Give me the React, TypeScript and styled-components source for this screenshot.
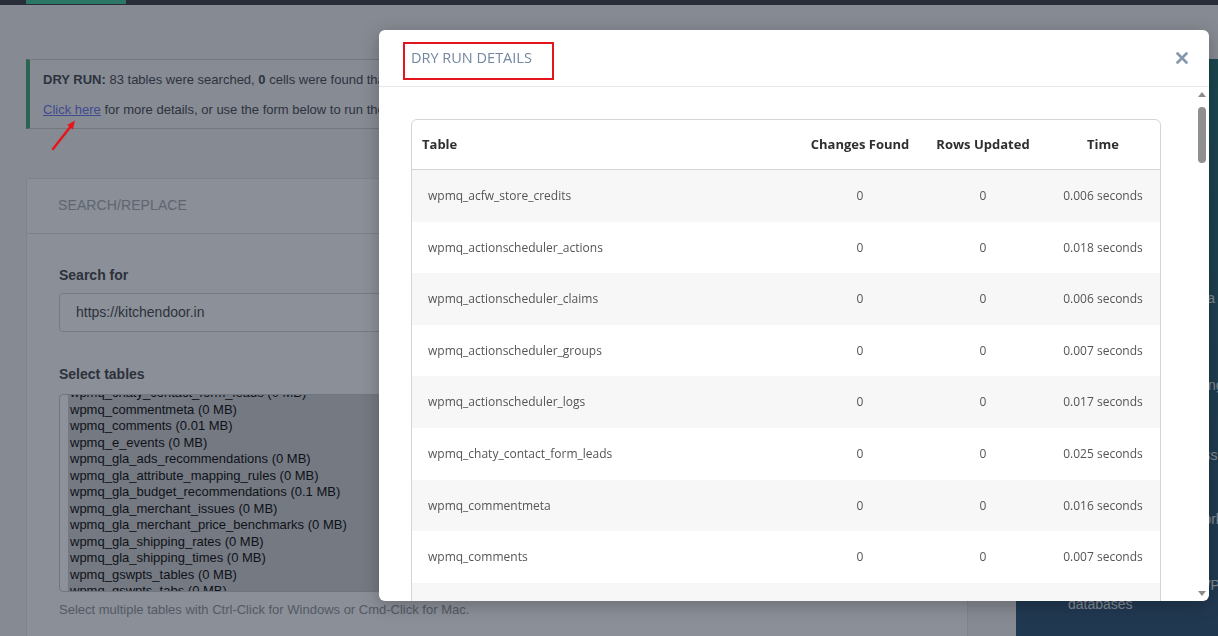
import React, { useLayoutEffect, useRef } from 'react';
import styled, { createGlobalStyle } from 'styled-components';

const GlobalStyle = createGlobalStyle`
  html, body { margin: 0; padding: 0; height: 100%; overflow: hidden; background: #f0f0f1; }
  body { font-family: "Liberation Sans", Arial, sans-serif; color: #3c3c3c; }
  * { box-sizing: border-box; }
`;

const TABLES: string[] = [
  'wpmq_acfw_store_credits', 'wpmq_actionscheduler_actions', 'wpmq_actionscheduler_claims',
  'wpmq_actionscheduler_groups', 'wpmq_actionscheduler_logs', 'wpmq_chaty_contact_form_leads',
  'wpmq_commentmeta', 'wpmq_comments', 'wpmq_e_events', 'wpmq_gla_ads_recommendations',
  'wpmq_gla_attribute_mapping_rules', 'wpmq_gla_budget_recommendations', 'wpmq_gla_merchant_issues',
  'wpmq_gla_merchant_price_benchmarks', 'wpmq_gla_shipping_rates', 'wpmq_gla_shipping_times',
  'wpmq_gswpts_tables', 'wpmq_gswpts_tabs', 'wpmq_links', 'wpmq_litespeed_img_optm',
  'wpmq_litespeed_url', 'wpmq_litespeed_url_file', 'wpmq_options', 'wpmq_postmeta', 'wpmq_posts',
  'wpmq_rank_math_404_logs', 'wpmq_rank_math_internal_links', 'wpmq_rank_math_internal_meta',
  'wpmq_rank_math_redirections', 'wpmq_rank_math_redirections_cache', 'wpmq_term_relationships',
  'wpmq_term_taxonomy', 'wpmq_termmeta', 'wpmq_terms', 'wpmq_usermeta', 'wpmq_users',
  'wpmq_wc_admin_note_actions', 'wpmq_wc_admin_notes', 'wpmq_wc_category_lookup',
  'wpmq_wc_customer_lookup', 'wpmq_wc_download_log', 'wpmq_wc_order_addresses',
  'wpmq_wc_order_coupon_lookup', 'wpmq_wc_order_operational_data', 'wpmq_wc_order_product_lookup',
  'wpmq_wc_order_stats', 'wpmq_wc_order_tax_lookup', 'wpmq_wc_orders', 'wpmq_wc_orders_meta',
  'wpmq_wc_product_attributes_lookup', 'wpmq_wc_product_download_directories',
  'wpmq_wc_product_meta_lookup', 'wpmq_wc_rate_limits', 'wpmq_wc_reserved_stock',
  'wpmq_wc_tax_rate_classes', 'wpmq_wc_webhooks', 'wpmq_woocommerce_api_keys',
  'wpmq_woocommerce_attribute_taxonomies', 'wpmq_woocommerce_downloadable_product_permissions',
  'wpmq_woocommerce_log', 'wpmq_woocommerce_order_itemmeta', 'wpmq_woocommerce_order_items',
  'wpmq_woocommerce_payment_tokenmeta', 'wpmq_woocommerce_payment_tokens', 'wpmq_woocommerce_sessions',
  'wpmq_woocommerce_shipping_zone_locations', 'wpmq_woocommerce_shipping_zone_methods',
  'wpmq_woocommerce_shipping_zones', 'wpmq_woocommerce_tax_rate_locations', 'wpmq_woocommerce_tax_rates',
  'wpmq_wpforms_logs', 'wpmq_wpforms_payment_meta', 'wpmq_wpforms_payments', 'wpmq_wpforms_tasks_meta',
  'wpmq_wpmailsmtp_debug_events', 'wpmq_wpmailsmtp_tasks_meta', 'wpmq_wpr_rocket_cache',
  'wpmq_wpr_rucss_used_css', 'wpmq_yoast_indexable', 'wpmq_yoast_indexable_hierarchy',
  'wpmq_yoast_migrations', 'wpmq_yoast_primary_term', 'wpmq_yoast_seo_links',
];

const KNOWN_TIMES = ['0.006', '0.018', '0.006', '0.007', '0.017', '0.025', '0.016', '0.007'];
const SIZES: Record<string, string> = {
  wpmq_comments: '0.01', wpmq_gla_budget_recommendations: '0.1', wpmq_options: '1.52',
  wpmq_postmeta: '3.52', wpmq_posts: '2.08', wpmq_actionscheduler_actions: '0.05',
  wpmq_actionscheduler_logs: '0.03', wpmq_wc_orders_meta: '0.02',
};

const timeFor = (i: number) => (i < KNOWN_TIMES.length ? KNOWN_TIMES[i] : `0.0${((i * 7) % 9) + 1}${(i * 3) % 10}`);

/* ---------- page ---------- */
const Page = styled.div`
  height: 636px;
  overflow: hidden;
  background: #f0f0f1;
`;

const TopBar = styled.div`
  height: 5px;
  background: #34363f;
  display: flex;
  padding-left: 26px;
`;

const TopTab = styled.div`
  width: 100px;
  height: 4px;
  background: #3cc896;
`;

const Content = styled.div`
  display: flex;
  align-items: flex-start;
  gap: 48px;
  padding: 54px 0 0 26px;
`;

const Main = styled.div`
  width: 942px;
  flex: none;
  display: flex;
  flex-direction: column;
  gap: 49px;
`;

const Notice = styled.div`
  background: #f3f3f4;
  border: 1px solid #c8cacd;
  border-left: 4px solid #3aa76d;
  padding: 10px 12px 8px 13px;
  font-size: 13px;
  line-height: 19.5px;
  color: #3c434a;
`;

const NoticeLine = styled.p`
  margin: 0;
  & + & { margin-top: 10.5px; }
  b { font-weight: 700; }
`;

const Link = styled.a`
  color: #6570e8;
  text-decoration: underline;
`;

const Card = styled.section`
  background: #fafafa;
  border: 1px solid #e1e3e6;
`;

const CardHeader = styled.div`
  height: 55px;
  display: flex;
  align-items: center;
  padding: 0 0 2px 31px;
  border-bottom: 1px solid #dcdee1;
  font-size: 14px;
  letter-spacing: 0.1px;
  color: #a3a8ae;
  text-transform: uppercase;
`;

const CardBody = styled.div`
  padding: 31px 32px 40px 32px;
  display: flex;
  flex-direction: column;
`;

const Label = styled.label`
  font-size: 14px;
  font-weight: 700;
  line-height: 20px;
  color: #3c3f44;
  margin-bottom: 8px;
`;

const TextInput = styled.div`
  height: 39px;
  border: 1px solid #cfd2d6;
  border-radius: 4px;
  background: #fdfdfd;
  display: flex;
  align-items: center;
  padding-left: 16px;
  font-size: 14px;
  color: #3c3f44;
  margin-bottom: 32px;
`;

const TableSelect = styled.div`
  height: 198px;
  border: 1px solid #c5c8cc;
  border-radius: 4px;
  background: #ffffff;
  padding-left: 8px;
  overflow: hidden;
  margin-top: 2px;
`;

const TableOption = styled.div`
  height: 16.5px;
  line-height: 16.5px;
  padding-left: 2px;
  font-size: 13px;
  color: #000;
  background: #cecece;
  white-space: nowrap;
`;

const Help = styled.p`
  margin: 10px 0 0;
  font-size: 13px;
  line-height: 16px;
  color: #8c9096;
`;

const Sidebar = styled.aside`
  flex: none;
  width: 280px;
  height: 640px;
  background: linear-gradient(180deg, #1b6b69 0%, #22596d 45%, #284a6f 100%);
  padding: 231px 0 0 52px;
  color: #e6edf3;
  font-size: 14px;
`;

const Feature = styled.p<{ $gap: number }>`
  margin: ${(p) => p.$gap}px 0 0;
  line-height: 16px;
  white-space: nowrap;
`;

/* ---------- overlay + modal ---------- */
const Backdrop = styled.div`
  position: fixed;
  inset: 0;
  background: rgba(28, 35, 51, 0.5);
`;

const Pointer = styled.svg`
  position: fixed;
  left: 48px;
  top: 116px;
`;

const Modal = styled.div`
  position: fixed;
  left: 379px;
  top: 30px;
  width: 830px;
  height: 571px;
  background: #fff;
  border-radius: 6px;
  box-shadow: 0 4px 18px rgba(0, 0, 0, 0.25);
  display: flex;
  flex-direction: column;
  overflow: hidden;
  font-family: "Open Sans", "Noto Sans", sans-serif;
`;

const ModalHeader = styled.div`
  height: 57px;
  flex: none;
  border-bottom: 1px solid #e4e6e9;
  display: flex;
  align-items: center;
  justify-content: space-between;
  padding: 5px 21px 0 24px;
`;

const TitleMark = styled.div`
  border: 2px solid #e3161d;
  padding: 5px 20px 11px 6px;
`;

const Title = styled.h2`
  margin: 0;
  font-size: 14.5px;
  line-height: 18px;
  font-weight: 400;
  color: #7487a0;
  text-transform: uppercase;
  white-space: nowrap;
`;

const CloseButton = styled.button`
  border: 0;
  background: none;
  padding: 0;
  margin-top: -5px;
  width: 12px;
  height: 12px;
  display: flex;
  cursor: pointer;
`;

const ModalBody = styled.div`
  flex: 1;
  min-height: 0;
  display: flex;
`;

const ScrollArea = styled.div`
  flex: 1;
  min-width: 0;
  overflow: hidden;
  padding: 32px 34px 0 32px;
`;

const ScrollRail = styled.div`
  flex: none;
  width: 14px;
  display: flex;
  flex-direction: column;
  align-items: center;
  padding: 4px 0 5px;
`;

const ArrowUp = styled.span`
  width: 0;
  height: 0;
  margin-top: 1px;
  border-left: 4px solid transparent;
  border-right: 4px solid transparent;
  border-bottom: 5px solid #8c8c8c;
`;

const ArrowDown = styled.span`
  width: 0;
  height: 0;
  margin-top: auto;
  border-left: 4px solid transparent;
  border-right: 4px solid transparent;
  border-top: 5px solid #8c8c8c;
`;

const Thumb = styled.div`
  width: 8px;
  height: 56px;
  margin-top: 10px;
  border-radius: 4px;
  background: #8f8f8f;
`;

const TableFrame = styled.div`
  border: 1px solid #d2d4d7;
  border-radius: 6px;
  overflow: hidden;
`;

const ResultTable = styled.table`
  width: 100%;
  border-collapse: collapse;
  table-layout: fixed;

  th {
    font-size: 13px;
    font-weight: 700;
    color: #2f2f2f;
    line-height: 20px;
    padding: 14px 10px 15px;
    text-align: center;
    border-bottom: 1px solid #d2d4d7;
    white-space: nowrap;
  }
  th:first-child { text-align: left; }

  td {
    font-size: 12px;
    color: #555;
    line-height: 19.6px;
    padding: 16px 10px;
    text-align: center;
    white-space: nowrap;
  }
  td:first-child { text-align: left; padding-left: 16px; }

  tbody tr:nth-child(odd) { background: #f7f7f7; }
`;

const CloseIcon = () => (
  <svg width="12" height="12" viewBox="0 0 12 12">
    <path d="M1.5 1.5 L10.5 10.5 M10.5 1.5 L1.5 10.5" stroke="#8497ad" strokeWidth="2.6" strokeLinecap="round" />
  </svg>
);

export default function App() {
  const listRef = useRef<HTMLDivElement>(null);
  useLayoutEffect(() => {
    if (listRef.current) listRef.current.scrollTop = 5 * 16.5 + 9.5;
  }, []);

  return (
    <>
      <GlobalStyle />
      <Page>
        <TopBar>
          <TopTab />
        </TopBar>
        <Content>
          <Main>
            <Notice>
              <NoticeLine>
                <b>DRY RUN:</b> 83 tables were searched, <b>0</b> cells were found that need to be updated, and 0
                changes were made.
              </NoticeLine>
              <NoticeLine>
                <Link href="#">Click here</Link> for more details, or use the form below to run the search/replace.
              </NoticeLine>
            </Notice>
            <Card>
              <CardHeader>Search/Replace</CardHeader>
              <CardBody>
                <Label>Search for</Label>
                <TextInput>https://kitchendoor.in</TextInput>
                <Label>Select tables</Label>
                <TableSelect ref={listRef}>
                  {TABLES.map((t) => (
                    <TableOption key={t}>
                      {t} ({SIZES[t] ?? '0'} MB)
                    </TableOption>
                  ))}
                </TableSelect>
                <Help>Select multiple tables with Ctrl-Click for Windows or Cmd-Click for Mac.</Help>
              </CardBody>
            </Card>
          </Main>
          <Sidebar>
            <Feature $gap={0}>Push and pull your data</Feature>
            <Feature $gap={71}>Export and import settings</Feature>
            <Feature $gap={54}>Find and replace across all</Feature>
            <Feature $gap={0}>tables in one go</Feature>
            <Feature $gap={32}>Migrate multisite networks with</Feature>
            <Feature $gap={0}>full control</Feature>
            <Feature $gap={34}>Back up and restore WP IP</Feature>
            <Feature $gap={3}>databases</Feature>
          </Sidebar>
        </Content>
      </Page>

      <Backdrop />
      <Pointer width="34" height="40" viewBox="0 0 34 40">
        <line x1="5" y1="33" x2="22" y2="11.3" stroke="#e8151b" strokeWidth="2.4" strokeLinecap="round" />
        <polygon points="27,4.5 19.2,9.1 24.8,13.5" fill="#e8151b" />
      </Pointer>

      <Modal role="dialog">
        <ModalHeader>
          <TitleMark>
            <Title>Dry Run Details</Title>
          </TitleMark>
          <CloseButton aria-label="Close">
            <CloseIcon />
          </CloseButton>
        </ModalHeader>
        <ModalBody>
          <ScrollArea>
            <TableFrame>
              <ResultTable>
                <colgroup>
                  <col style={{ width: 386 }} />
                  <col style={{ width: 124 }} />
                  <col style={{ width: 122 }} />
                  <col style={{ width: 118 }} />
                </colgroup>
                <thead>
                  <tr>
                    <th>Table</th>
                    <th>Changes Found</th>
                    <th>Rows Updated</th>
                    <th>Time</th>
                  </tr>
                </thead>
                <tbody>
                  {TABLES.map((t, i) => (
                    <tr key={t}>
                      <td>{t}</td>
                      <td>0</td>
                      <td>0</td>
                      <td>{timeFor(i)} seconds</td>
                    </tr>
                  ))}
                </tbody>
              </ResultTable>
            </TableFrame>
          </ScrollArea>
          <ScrollRail aria-hidden="true">
            <ArrowUp />
            <Thumb />
            <ArrowDown />
          </ScrollRail>
        </ModalBody>
      </Modal>
    </>
  );
}
